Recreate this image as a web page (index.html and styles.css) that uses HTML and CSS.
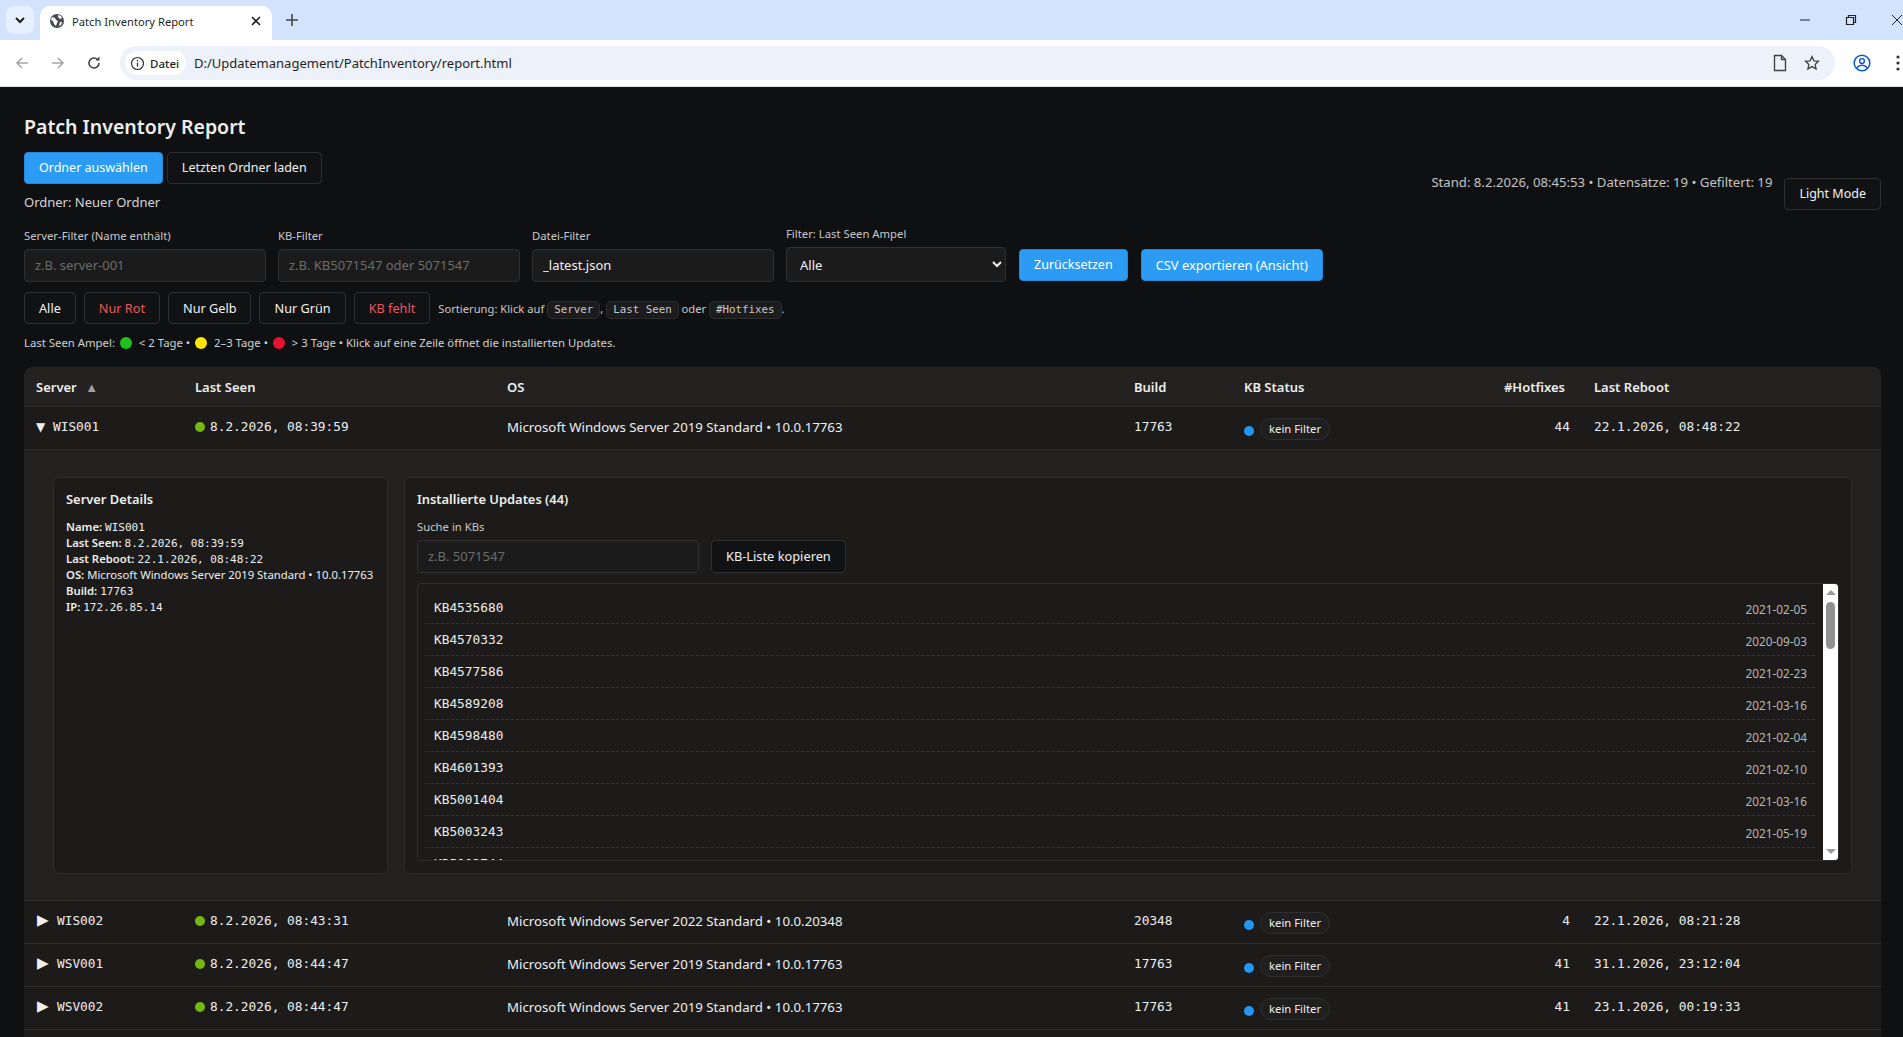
FILE: index.html
```html
<!DOCTYPE html>
<html lang="de">
<head>
    <meta charset="UTF-8">
    <meta name="viewport" content="width=device-width, initial-scale=1.0">
    <title>Patch Inventory Report</title>
    <link rel="stylesheet" href="styles.css">
</head>
<body>
    <!-- Browser-Rahmen -->
    <div class="tabstrip">
        <div class="tab-search">
            <svg width="12" height="12" viewBox="0 0 12 12"><path d="M2 4l4 4 4-4" fill="none" stroke="#1f1f1f" stroke-width="2"/></svg>
        </div>
        <div class="tab">
            <svg class="favicon" width="16" height="16" viewBox="0 0 16 16"><circle cx="8" cy="8" r="7" fill="#474c52"/><path d="M3 4l3 1 1 2 2 1-1 2-1 3-2-2-1-3-2-1zM9 2l3 1 1 2-2 1-2-2zM11 9l2 0-1 3-2 1z" fill="#fff"/></svg>
            <span class="tab-title">Patch Inventory Report</span>
            <svg class="tab-close" width="12" height="12" viewBox="0 0 12 12"><path d="M2 2l8 8M10 2l-8 8" stroke="#1f1f1f" stroke-width="1.6"/></svg>
        </div>
        <svg class="tab-new" width="14" height="14" viewBox="0 0 14 14"><path d="M7 1v12M1 7h12" stroke="#444" stroke-width="1.6"/></svg>
        <div class="win-controls">
            <svg width="12" height="12" viewBox="0 0 12 12"><path d="M1 6h10" stroke="#222" stroke-width="1"/></svg>
            <svg width="12" height="12" viewBox="0 0 12 12"><path d="M1.5 3.5h7v7h-7zM3.5 3.5v-2h7v7h-2" fill="none" stroke="#222" stroke-width="1.2"/></svg>
            <svg width="12" height="12" viewBox="0 0 12 12"><path d="M1 1l10 10M11 1l-10 10" stroke="#222" stroke-width="1"/></svg>
        </div>
    </div>
    <div class="urlbar">
        <svg class="nav-icon" width="16" height="16" viewBox="0 0 16 16"><path d="M14 8H3M8 3L3 8l5 5" fill="none" stroke="#a5a8ad" stroke-width="1.6"/></svg>
        <svg class="nav-icon" width="16" height="16" viewBox="0 0 16 16"><path d="M2 8h11M8 3l5 5-5 5" fill="none" stroke="#a5a8ad" stroke-width="1.6"/></svg>
        <svg class="nav-icon" width="16" height="16" viewBox="0 0 16 16"><path d="M13 8a5 5 0 1 1-1.6-3.7" fill="none" stroke="#444" stroke-width="1.6"/><path d="M13.5 1.5v4h-4z" fill="#444"/></svg>
        <div class="omnibox">
            <div class="site-chip">
                <svg width="15" height="15" viewBox="0 0 16 16"><circle cx="8" cy="8" r="6.4" fill="none" stroke="#333" stroke-width="1.3"/><path d="M8 7v4.4" stroke="#333" stroke-width="1.4"/><circle cx="8" cy="4.9" r="0.9" fill="#333"/></svg>
                <span>Datei</span>
            </div>
            <span class="url">D:/Updatemanagement/PatchInventory/report.html</span>
            <div class="omni-icons">
                <svg width="16" height="18" viewBox="0 0 16 18"><path d="M2.5 1.5h7l4 4v11h-11zM9.5 1.5v4h4" fill="none" stroke="#444" stroke-width="1.4"/></svg>
                <svg width="16" height="16" viewBox="0 0 16 16"><path d="M8 1.6l1.9 4.2 4.6.5-3.4 3.1 1 4.5L8 11.6l-4.1 2.3 1-4.5L1.500 6.300l4.600-.5z" fill="none" stroke="#444" stroke-width="1.3"/></svg>
            </div>
        </div>
        <svg class="profile" width="18" height="18" viewBox="0 0 18 18"><circle cx="9" cy="9" r="7.800" fill="none" stroke="#0b57d0" stroke-width="1.500"/><circle cx="9" cy="7" r="2.400" fill="none" stroke="#0b57d0" stroke-width="1.400"/><path d="M3.800 14c1.500-2.200 3.200-2.800 5.200-2.800s3.700.6 5.200 2.800" fill="none" stroke="#0b57d0" stroke-width="1.400"/></svg>
        <svg class="menu-dots" width="4" height="16" viewBox="0 0 4 16"><circle cx="2" cy="2" r="1.600" fill="#333"/><circle cx="2" cy="8" r="1.600" fill="#333"/><circle cx="2" cy="14" r="1.600" fill="#333"/></svg>
    </div>

    <main class="page">
        <header class="top">
            <div>
                <h1>Patch Inventory Report</h1>
                <div class="btn-row">
                    <button class="btn btn-primary">Ordner auswählen</button>
                    <button class="btn">Letzten Ordner laden</button>
                </div>
                <div class="folder">Ordner: Neuer Ordner</div>
            </div>
            <div class="top-right">
                <span class="meta">Stand: 8.2.2026, 08:45:53 • Datensätze: 19 • Gefiltert: 19</span>
                <button class="btn">Light Mode</button>
            </div>
        </header>

        <div class="filters">
            <div class="field">
                <label for="f-server">Server-Filter (Name enthält)</label>
                <input id="f-server" class="input-field" type="text" placeholder="z.B. server-001">
            </div>
            <div class="field">
                <label for="f-kb">KB-Filter</label>
                <input id="f-kb" class="input-field" type="text" placeholder="z.B. KB5071547 oder 5071547">
            </div>
            <div class="field">
                <label for="f-file">Datei-Filter</label>
                <input id="f-file" class="input-field" type="text" value="_latest.json">
            </div>
            <div class="field">
                <label for="f-ampel">Filter: Last Seen Ampel</label>
                <select id="f-ampel" class="select-field"><option>Alle</option></select>
            </div>
            <button class="btn btn-primary">Zurücksetzen</button>
            <button class="btn btn-primary btn-csv">CSV exportieren (Ansicht)</button>
        </div>

        <div class="chips">
            <button class="btn">Alle</button>
            <button class="btn btn-danger">Nur Rot</button>
            <button class="btn">Nur Gelb</button>
            <button class="btn">Nur Grün</button>
            <button class="btn btn-danger">KB fehlt</button>
            <span class="sort-hint">Sortierung: Klick auf <code>Server</code>, <code>Last Seen</code> oder <code>#Hotfixes</code>.</span>
        </div>

        <div class="legend">
            Last Seen Ampel: <i class="lamp lamp-green"></i> &lt; 2 Tage • <i class="lamp lamp-yellow"></i> 2–3 Tage • <i class="lamp lamp-red"></i> &gt; 3 Tage • Klick auf eine Zeile öffnet die installierten Updates.
        </div>

        <div class="table-wrap">
            <table>
                <colgroup>
                    <col class="c-server"><col class="c-seen"><col class="c-os"><col class="c-build"><col class="c-status"><col class="c-hot"><col class="c-reboot">
                </colgroup>
                <thead>
                    <tr>
                        <th>Server <span class="sort-arrow">▲</span></th>
                        <th>Last Seen</th>
                        <th>OS</th>
                        <th>Build</th>
                        <th>KB Status</th>
                        <th class="num">#Hotfixes</th>
                        <th>Last Reboot</th>
                    </tr>
                </thead>
                <tbody>
                    <tr>
                        <td class="mono"><span class="caret-open">▼</span>WIS001</td>
                        <td class="mono"><i class="dot dot-green"></i>8.2.2026, 08:39:59</td>
                        <td>Microsoft Windows Server 2019 Standard • 10.0.17763</td>
                        <td class="mono">17763</td>
                        <td class="status"><i class="dot dot-blue"></i><span class="pill">kein Filter</span></td>
                        <td class="mono num">44</td>
                        <td class="mono">22.1.2026, 08:48:22</td>
                    </tr>
                    <tr class="detail-row">
                        <td colspan="7">
                            <div class="detail-grid">
                                <section class="card">
                                    <h3>Server Details</h3>
                                    <div class="kv">
                                        <div><b>Name:</b> <code>WIS001</code></div>
                                        <div><b>Last Seen:</b> <code>8.2.2026, 08:39:59</code></div>
                                        <div><b>Last Reboot:</b> <code>22.1.2026, 08:48:22</code></div>
                                        <div><b>OS:</b> Microsoft Windows Server 2019 Standard • 10.0.17763</div>
                                        <div><b>Build:</b> <code>17763</code></div>
                                        <div><b>IP:</b> <code>172.26.85.14</code></div>
                                    </div>
                                </section>
                                <section class="card">
                                    <h3>Installierte Updates (44)</h3>
                                    <label class="kb-label" for="f-kbsearch">Suche in KBs</label>
                                    <div class="kb-tools">
                                        <input id="f-kbsearch" class="input-field" type="text" placeholder="z.B. 5071547">
                                        <button class="btn">KB-Liste kopieren</button>
                                    </div>
                                    <div class="kb-box">
                                        <ul class="kb-list">
                                            <li><span>KB4535680</span><small>2021-02-05</small></li>
                                            <li><span>KB4570332</span><small>2020-09-03</small></li>
                                            <li><span>KB4577586</span><small>2021-02-23</small></li>
                                            <li><span>KB4589208</span><small>2021-03-16</small></li>
                                            <li><span>KB4598480</span><small>2021-02-04</small></li>
                                            <li><span>KB4601393</span><small>2021-02-10</small></li>
                                            <li><span>KB5001404</span><small>2021-03-16</small></li>
                                            <li><span>KB5003243</span><small>2021-05-19</small></li>
                                            <li><span>KB5003744</span></li>
                                        </ul>
                                        <div class="scrollbar">
                                            <i class="sb-up"></i>
                                            <i class="sb-thumb"></i>
                                            <i class="sb-down"></i>
                                        </div>
                                    </div>
                                </section>
                            </div>
                        </td>
                    </tr>
                    <tr>
                        <td class="mono"><span class="caret">▶</span>WIS002</td>
                        <td class="mono"><i class="dot dot-green"></i>8.2.2026, 08:43:31</td>
                        <td>Microsoft Windows Server 2022 Standard • 10.0.20348</td>
                        <td class="mono">20348</td>
                        <td class="status"><i class="dot dot-blue"></i><span class="pill">kein Filter</span></td>
                        <td class="mono num">4</td>
                        <td class="mono">22.1.2026, 08:21:28</td>
                    </tr>
                    <tr>
                        <td class="mono"><span class="caret">▶</span>WSV001</td>
                        <td class="mono"><i class="dot dot-green"></i>8.2.2026, 08:44:47</td>
                        <td>Microsoft Windows Server 2019 Standard • 10.0.17763</td>
                        <td class="mono">17763</td>
                        <td class="status"><i class="dot dot-blue"></i><span class="pill">kein Filter</span></td>
                        <td class="mono num">41</td>
                        <td class="mono">31.1.2026, 23:12:04</td>
                    </tr>
                    <tr>
                        <td class="mono"><span class="caret">▶</span>WSV002</td>
                        <td class="mono"><i class="dot dot-green"></i>8.2.2026, 08:44:47</td>
                        <td>Microsoft Windows Server 2019 Standard • 10.0.17763</td>
                        <td class="mono">17763</td>
                        <td class="status"><i class="dot dot-blue"></i><span class="pill">kein Filter</span></td>
                        <td class="mono num">41</td>
                        <td class="mono">23.1.2026, 00:19:33</td>
                    </tr>
                    <tr class="empty-row"><td colspan="7"></td></tr>
                </tbody>
            </table>
        </div>
    </main>
</body>
</html>
```

FILE: styles.css
```css
html, body {
    height: 100%;
    margin: 0;
    overflow: hidden;
}
body {
    font-family: "Noto Sans", Arial, sans-serif;
    font-size: 13px;
    background-color: #0f1012;
    color: #eeeeee;
}
code, .mono {
    font-family: "DejaVu Sans Mono", monospace;
}

/* Browser-Rahmen */
.tabstrip {
    height: 40px;
    background-color: #d3e3fd;
    display: flex;
    align-items: flex-end;
    position: relative;
}
.tab-search {
    width: 28px;
    height: 28px;
    margin: 0 6px 6px 6px;
    background-color: #e6effe;
    border-radius: 8px;
    display: flex;
    align-items: center;
    justify-content: center;
}
.tab {
    width: 232px;
    height: 34px;
    background-color: #ffffff;
    border-radius: 10px 10px 0 0;
    display: flex;
    align-items: center;
    padding: 0 10px 4px 9px;
    box-sizing: border-box;
}
.favicon {
    margin-right: 7px;
}
.tab-title {
    flex: 1;
    font-size: 11.200px;
    color: #1f1f1f;
}
.tab-new {
    margin: 0 0 13px 13px;
}
.win-controls {
    margin-left: auto;
    width: 112px;
    height: 40px;
    display: flex;
    align-items: center;
    gap: 34px;
    margin-right: -8px;
}
.urlbar {
    height: 46px;
    background-color: #ffffff;
    border-bottom: 1px solid #dcdcdc;
    display: flex;
    align-items: center;
    padding-left: 14px;
}
.nav-icon {
    margin-right: 20px;
}
.omnibox {
    width: 1715px;
    height: 34px;
    margin-left: -2px;
    background-color: #edf2fa;
    border-radius: 17px;
    display: flex;
    align-items: center;
    padding-left: 5px;
    box-sizing: border-box;
}
.site-chip {
    height: 24px;
    width: 61px;
    background-color: #ffffff;
    border-radius: 12px;
    display: flex;
    align-items: center;
    gap: 5px;
    padding-left: 5px;
    box-sizing: border-box;
    font-size: 11.500px;
    font-weight: 500;
    color: #1f1f1f;
}
.url {
    margin-left: 8px;
    font-size: 13px;
    color: #1f1f1f;
}
.omni-icons {
    margin-left: auto;
    margin-right: 15px;
    display: flex;
    align-items: center;
    gap: 16px;
}
.profile {
    margin-left: 18px;
}
.menu-dots {
    margin-left: 25px;
}

/* Seite */
.page {
    padding: 25px 22px 0 24px;
}
.top {
    display: flex;
    justify-content: space-between;
    align-items: flex-end;
}
h1 {
    margin: 0 0 10px 0;
    font-size: 19.500px;
    line-height: 30px;
    font-weight: 600;
}
.btn-row {
    display: flex;
    gap: 4px;
}
.folder {
    margin-top: 8px;
    line-height: 20px;
    color: #d6d6d6;
}
.top-right {
    display: flex;
    align-items: flex-start;
    gap: 12px;
    margin-bottom: 2px;
}
.meta {
    font-size: 13.150px;
    color: #c4c4c4;
    margin-top: -5px;
}
.btn {
    height: 32px;
    padding: 0 14px 1px 14px;
    font-family: inherit;
    font-size: 12.500px;
    color: #f2f2f2;
    background-color: #111214;
    border: 1px solid #2f2f2f;
    border-radius: 4px;
    cursor: pointer;
}
.btn-primary {
    background-color: #2b9bf4;
    border-color: #2389d8;
    color: #ffffff;
}
.btn-danger {
    color: #e5595f;
}
.filters {
    display: flex;
    align-items: flex-end;
    gap: 12px;
    margin-top: 14px;
}
.filters .btn {
    margin: 0 1px 1px 1px;
}
.filters .btn-csv {
    font-size: 12.900px;
    margin-left: 0;
}
.field {
    display: flex;
    flex-direction: column;
}
.field label, .kb-label {
    font-size: 11.300px;
    line-height: 16px;
    margin-bottom: 5px;
    color: #c8c8c8;
}
.input-field {
    width: 242px;
    height: 33px;
    box-sizing: border-box;
    padding: 0 10px 2px 10px;
    font-family: inherit;
    font-size: 13px;
    color: #f0f0f0;
    background-color: #1b1b1b;
    border: 1px solid #2f2f2f;
    border-radius: 4px;
}
.input-field::placeholder {
    color: #6c6c6c;
}
.select-field {
    width: 220px;
    height: 35px;
    padding: 0 9px;
    font-family: inherit;
    font-size: 13px;
    color: #f0f0f0;
    background-color: #1b1b1b;
    border: 1px solid #2f2f2f;
    border-radius: 4px;
    color-scheme: dark;
}
.chips {
    display: flex;
    align-items: center;
    gap: 8px;
    margin-top: 10px;
}
.chips .btn {
    font-size: 12.700px;
}
.sort-hint {
    font-size: 11.200px;
    color: #c8c8c8;
    margin-top: 3px;
}
.sort-hint code {
    display: inline-block;
    font-size: 10.800px;
    line-height: 16px;
    padding: 0 6px;
    background-color: #1c1c1c;
    border: 1px solid #2c2c2c;
    border-radius: 5px;
}
.legend {
    margin-top: 10px;
    font-size: 11.350px;
    line-height: 18px;
    color: #d0d0d0;
}
.lamp {
    display: inline-block;
    width: 12px;
    height: 12px;
    border-radius: 50%;
    margin: 0 4px 0 2px;
    vertical-align: -2px;
}
.lamp-green { background-color: #1ec31e; }
.lamp-yellow { background-color: #ffe600; }
.lamp-red { background-color: #e8112d; }

/* Tabelle */
.table-wrap {
    margin-top: 15px;
    width: 1857px;
    border-radius: 8px 8px 0 0;
    overflow: hidden;
}
table {
    width: 100%;
    table-layout: fixed;
    border-collapse: separate;
    border-spacing: 0;
}
.c-server { width: 159px; }
.c-seen { width: 312px; }
.c-os { width: 627px; }
.c-build { width: 110px; }
.c-status { width: 250px; }
.c-hot { width: 100px; }
.c-reboot { width: 299px; }
th {
    height: 39px;
    padding: 0 12px;
    font-size: 13px;
    font-weight: 600;
    text-align: left;
    background-color: #232220;
    border-bottom: 1px solid #2f2e2c;
}
th.num {
    padding-right: 17px;
    text-align: right;
}
td {
    padding: 9px 12px 11px 12px;
    font-size: 13.250px;
    line-height: 18px;
    background-color: #1c1b1a;
    border-bottom: 1px solid #2f2e2c;
    white-space: nowrap;
}
td.mono {
    font-size: 12.800px;
}
td.status {
    padding-bottom: 9px;
}
.num {
    text-align: right;
}
.sort-arrow {
    font-size: 13px;
    color: #a0a0a0;
    margin-left: 5px;
}
.caret-open, .caret {
    display: inline-block;
    font-family: "DejaVu Sans", sans-serif;
    line-height: 1;
}
.caret-open {
    width: 17px;
    font-size: 12px;
}
.caret {
    width: 20px;
    margin-left: 1px;
    font-size: 15px;
}
.dot {
    display: inline-block;
    width: 10px;
    height: 10px;
    border-radius: 50%;
    margin-right: 5px;
    vertical-align: -1px;
}
.dot-green { background-color: #76b80f; }
.dot-blue {
    background-color: #2196f3;
    margin-right: 6px;
    vertical-align: -6px;
}
.pill {
    display: inline-block;
    font-size: 11.300px;
    line-height: 20px;
    padding: 0 8px;
    background-color: #1f1f1f;
    border: 1px solid #2e2e2e;
    border-radius: 11px;
    vertical-align: -3px;
}
.detail-row > td {
    padding: 27px 29px 26px 29px;
    background-color: #232220;
    white-space: normal;
}
.detail-grid {
    display: grid;
    grid-template-columns: 335px 1fr;
    gap: 16px;
}
.card {
    padding: 13px 12px 12px 12px;
    background-color: #1c1b1a;
    border: 1px solid #2f2e2c;
    border-radius: 6px;
}
h3 {
    margin: 0 0 11px 0;
    font-size: 12.900px;
    line-height: 17px;
    font-weight: 600;
}
.kv {
    font-size: 11.300px;
    line-height: 16px;
    white-space: nowrap;
}
.kv div {
    height: 16px;
}
.kv b {
    font-weight: 600;
}
.kv code {
    font-size: 11px;
}
.kb-label {
    display: block;
}
.kb-tools {
    display: flex;
    gap: 12px;
    margin-bottom: 10px;
}
.kb-tools .input-field {
    width: 282px;
}
.kb-tools .btn {
    height: 33px;
    font-size: 12.800px;
}
.kb-box {
    height: 278px;
    box-sizing: border-box;
    border: 1px solid #2f2e2c;
    border-radius: 4px;
    display: flex;
    overflow: hidden;
}
.kb-list {
    flex: 1;
    list-style: none;
    margin: 0;
    padding: 8px;
    overflow: hidden;
}
.kb-list li {
    height: 31px;
    padding: 0 8px;
    display: flex;
    justify-content: space-between;
    align-items: center;
    line-height: 30px;
    border-bottom: 1px dashed #343331;
}
.kb-list span {
    font-family: "DejaVu Sans Mono", monospace;
    font-size: 12.800px;
}
.kb-list small {
    font-size: 11.800px;
    line-height: 26px;
    padding-top: 3px;
    color: #b8b8b0;
}
.scrollbar {
    width: 15px;
    background-color: #ffffff;
    display: flex;
    flex-direction: column;
    align-items: center;
}
.sb-up, .sb-down {
    width: 0;
    height: 0;
    border-left: 5px solid transparent;
    border-right: 5px solid transparent;
}
.sb-up {
    margin-top: 6px;
    border-bottom: 5px solid #9a9a9a;
}
.sb-thumb {
    width: 9px;
    height: 47px;
    margin-top: 7px;
    background-color: #909090;
    border-radius: 5px;
}
.sb-down {
    margin-top: auto;
    margin-bottom: 6px;
    border-top: 5px solid #9a9a9a;
}
```
